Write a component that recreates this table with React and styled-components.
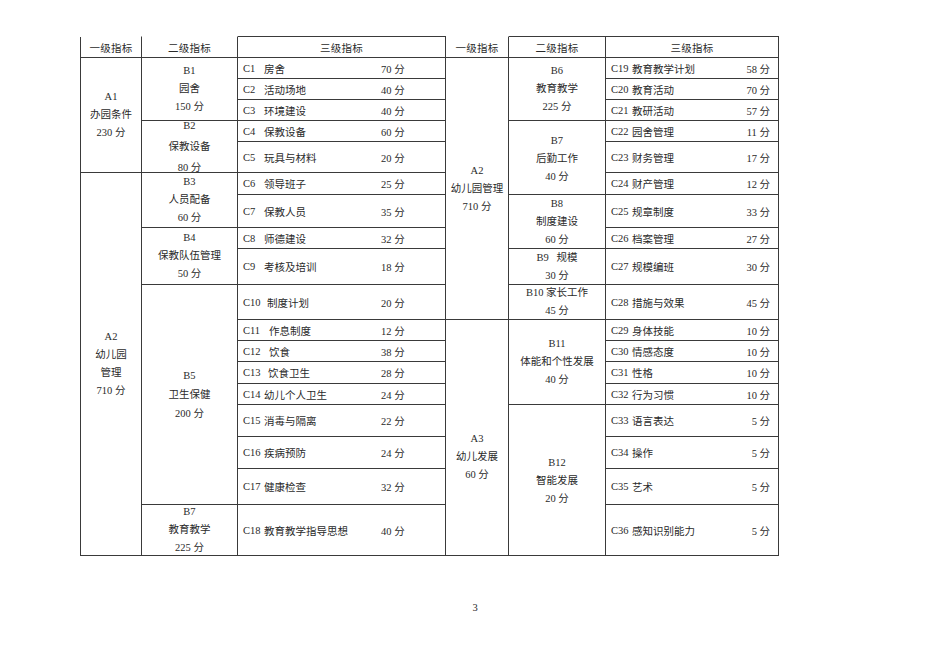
import styled, { createGlobalStyle } from 'styled-components';

const GlobalStyle = createGlobalStyle`
  html, body {
    margin: 0;
    padding: 0;
    background: #ffffff;
  }
  body {
    font-family: 'Liberation Serif', 'Noto Sans CJK SC', serif;
    color: #2a2a2a;
  }
`;

// 整页
const Page = styled.div`
  width: 950px;
  height: 672px;
  padding: 37px 0 0 80px;
  box-sizing: border-box;
  background: #ffffff;
`;

const LINE = '#3a3a3a';

const Table = styled.div`
  display: grid;
  grid-template-columns: 61px 96px 208px 63px 97px 173px;
  grid-template-rows: 21px 21px 21px 21px 21px 31px 22px 33px 21px 36px 35px 21px 21px 22px 21px 32px 32px 36px 51px;
  width: 698px;
  border-left: 1px solid ${LINE};
  box-sizing: border-box;
  font-size: 10.5px;
`;

const HeadCell = styled.div`
  display: flex;
  align-items: center;
  justify-content: center;
  border-right: 1px solid ${LINE};
  border-bottom: 1px solid ${LINE};
  border-top: 1px solid ${(p) => (p.$top ? LINE : 'transparent')};
  margin-top: -1px;
  letter-spacing: 0.3px;
`;

// 一级、二级指标 (合并单元格)
const GroupCell = styled.div`
  grid-row: ${(p) => p.$row};
  grid-column: ${(p) => p.$col};
  display: flex;
  flex-direction: column;
  align-items: center;
  justify-content: center;
  padding-top: ${(p) => p.$pad || 0}px;
  border-right: 1px solid ${LINE};
  border-bottom: 1px solid ${LINE};
  line-height: ${(p) => p.$lh || 18}px;
  white-space: pre;
`;

// 三级指标
const ItemCell = styled.div`
  grid-row: ${(p) => p.$row};
  grid-column: ${(p) => p.$col};
  display: flex;
  align-items: center;
  padding: 0 8px 0 5px;
  border-right: 1px solid ${LINE};
  border-bottom: 1px solid ${LINE};
  white-space: pre;
`;

const Label = styled.div`
  display: flex;
  align-items: center;
  ${(p) => (p.$side === 'left' ? 'width: 138px;' : 'flex: 1;')}
`;

const Code = styled.span`
  display: inline-block;
  width: ${(p) => p.$w}px;
  flex-shrink: 0;
`;

const Score = styled.span`
  flex-shrink: 0;
`;

const PageNo = styled.div`
  width: 950px;
  margin: 45px 0 0 -80px;
  text-align: center;
  font-size: 10.5px;
  line-height: 14px;
`;

const heads = [
  { text: '一级指标', top: false },
  { text: '二级指标', top: false },
  { text: '三级指标', top: true },
  { text: '一级指标', top: false },
  { text: '二级指标', top: true },
  { text: '三级指标', top: true },
];

const groups = [
  { col: 1, row: '2 / 7', lines: ['A1', '办园条件', '230 分'] },
  { col: 1, row: '7 / 20', lines: ['A2', '幼儿园', '管理', '710 分'] },
  { col: 2, row: '2 / 5', lines: ['B1', '园舍', '150 分'] },
  { col: 2, row: '5 / 7', lines: ['B2', '保教设备', '80 分'], lh: 21 },
  { col: 2, row: '7 / 9', lines: ['B3', '人员配备', '60 分'] },
  { col: 2, row: '9 / 11', lines: ['B4', '保教队伍管理', '50 分'] },
  { col: 2, row: '11 / 19', lines: ['B5', '卫生保健', '200 分'], lh: 19 },
  { col: 2, row: '19 / 20', lines: ['B7', '教育教学', '225 分'] },
  { col: 4, row: '2 / 12', lines: ['A2', '幼儿园管理', '710 分'] },
  { col: 4, row: '12 / 20', lines: ['A3', '幼儿发展', '60 分'], pad: 38 },
  { col: 5, row: '2 / 5', lines: ['B6', '教育教学', '225 分'] },
  { col: 5, row: '5 / 8', lines: ['B7', '后勤工作', '40 分'], pad: 2 },
  { col: 5, row: '8 / 10', lines: ['B8', '制度建设', '60 分'] },
  { col: 5, row: '10 / 11', lines: ['B9   规模', '30 分'] },
  { col: 5, row: '11 / 12', lines: ['B10 家长工作', '45 分'] },
  { col: 5, row: '12 / 16', lines: ['B11', '体能和个性发展', '40 分'] },
  { col: 5, row: '16 / 20', lines: ['B12', '智能发展', '20 分'], pad: 2 },
];

const leftItems = [
  ['C1', '房舍', 70],
  ['C2', '活动场地', 40],
  ['C3', '环境建设', 40],
  ['C4', '保教设备', 60],
  ['C5', '玩具与材料', 20],
  ['C6', '领导班子', 25],
  ['C7', '保教人员', 35],
  ['C8', '师德建设', 32],
  ['C9', '考核及培训', 18],
  ['C10', '制度计划', 20, 24],
  ['C11', '作息制度', 12, 26],
  ['C12', '饮食', 38, 26],
  ['C13', '饮食卫生', 28, 25],
  ['C14', '幼儿个人卫生', 24, 21],
  ['C15', '消毒与隔离', 22, 21],
  ['C16', '疾病预防', 24, 21],
  ['C17', '健康检查', 32, 21],
  ['C18', '教育教学指导思想', 40, 21],
];

const rightItems = [
  ['C19', '教育教学计划', 58],
  ['C20', '教育活动', 70],
  ['C21', '教研活动', 57],
  ['C22', '园舍管理', 11],
  ['C23', '财务管理', 17],
  ['C24', '财产管理', 12],
  ['C25', '规章制度', 33],
  ['C26', '档案管理', 27],
  ['C27', '规模编班', 30],
  ['C28', '措施与效果', 45],
  ['C29', '身体技能', 10],
  ['C30', '情感态度', 10],
  ['C31', '性格', 10],
  ['C32', '行为习惯', 10],
  ['C33', '语言表达', 5],
  ['C34', '操作', 5],
  ['C35', '艺术', 5],
  ['C36', '感知识别能力', 5],
];

function Item({ item, index, col, side }) {
  const [code, name, score, w] = item;
  return (
    <ItemCell $row={index + 2} $col={col}>
      <Label $side={side}>
        <Code $w={w || 21}>{code}</Code>
        <span>{name}</span>
      </Label>
      <Score>{score} 分</Score>
    </ItemCell>
  );
}

export default function App() {
  return (
    <Page>
      <GlobalStyle />
      <Table>
        {heads.map((h, i) => (
          <HeadCell key={i} $top={h.top}>
            {h.text}
          </HeadCell>
        ))}
        {groups.map((g, i) => (
          <GroupCell key={i} $row={g.row} $col={g.col} $lh={g.lh} $pad={g.pad}>
            {g.lines.map((l) => (
              <span key={l}>{l}</span>
            ))}
          </GroupCell>
        ))}
        {leftItems.map((it, i) => (
          <Item key={it[0]} item={it} index={i} col={3} side='left' />
        ))}
        {rightItems.map((it, i) => (
          <Item key={it[0]} item={it} index={i} col={6} side='right' />
        ))}
      </Table>
      <PageNo>3</PageNo>
    </Page>
  );
}
